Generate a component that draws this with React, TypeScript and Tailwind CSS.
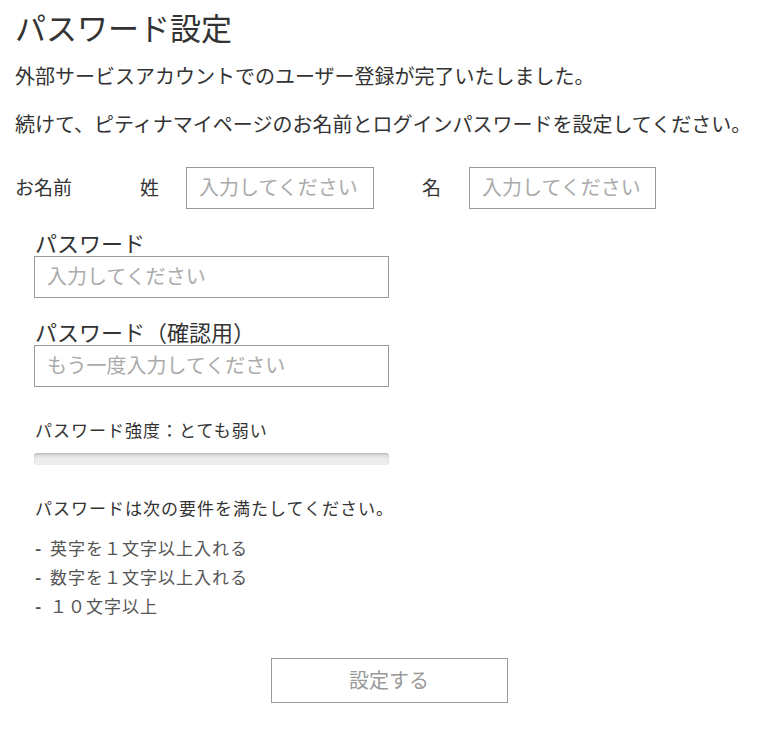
import React from "react";

const font = { fontFamily: '"Noto Sans CJK JP", "Noto Sans", sans-serif' };

const reqs = ["英字を１文字以上入れる", "数字を１文字以上入れる", "１０文字以上"];

export default function App() {
  return (
    <div className="bg-white w-[769px] min-h-[730px] pl-[15px] pt-[7px] text-[#333]" style={font}>
      <h1 className="text-[31px] leading-[40px] font-normal">パスワード設定</h1>
      <p className="mt-[14px] text-[20px] leading-[30px]">外部サービスアカウントでのユーザー登録が完了いたしました。</p>
      <p className="mt-[18px] text-[20px] leading-[30px]">続けて、ピティナマイページのお名前とログインパスワードを設定してください。</p>

      <div className="mt-[28px] flex items-center h-[42px] text-[19px]">
        <span className="w-[125px] pb-[2px]">お名前</span>
        <span className="w-[46px] pb-[2px]">姓</span>
        <input
          className="w-[188px] h-[42px] border border-[#999] px-[12px] pb-[4px] text-[20px] placeholder:text-[#aaa] outline-none"
          placeholder="入力してください"
        />
        <span className="ml-[48px] w-[47px] pb-[2px]">名</span>
        <input
          className="w-[187px] h-[42px] border border-[#999] px-[12px] pb-[4px] text-[20px] placeholder:text-[#aaa] outline-none"
          placeholder="入力してください"
        />
      </div>

      <div className="pl-[19px]">
        <label className="block mt-[19px] pl-[1px] text-[22px] leading-[28px]">パスワード</label>
        <input
          className="block w-[355px] h-[42px] border border-[#999] px-[12px] pb-[4px] text-[20px] placeholder:text-[#aaa] outline-none"
          placeholder="入力してください"
        />
        <label className="block mt-[19px] pl-[1px] text-[22px] leading-[28px]">パスワード（確認用）</label>
        <input
          className="block w-[355px] h-[42px] border border-[#999] px-[12px] pb-[4px] text-[20px] placeholder:text-[#aaa] outline-none"
          placeholder="もう一度入力してください"
        />

        <p className="mt-[31px] pl-[1px] text-[17px] tracking-[1px] leading-[24px]">パスワード強度：とても弱い</p>
        <div className="mt-[11px] w-[355px] h-[12px] rounded-[3px] bg-[linear-gradient(#d4d4d4,#ebebeb_45%,#efefef)] shadow-[inset_0_1px_2px_rgba(0,0,0,0.15)]" />

        <p className="mt-[31px] pl-[1px] text-[17px] tracking-[1px] leading-[24px]">パスワードは次の要件を満たしてください。</p>
        <ul className="mt-[13px] pl-[1px] text-[17px] tracking-[1px] leading-[29px] text-[#555]">
          {reqs.map((r) => (
            <li key={r} className="flex items-center">
              <span className="inline-block w-[15px] font-bold">-</span>
              <span>{r}</span>
            </li>
          ))}
        </ul>
      </div>

      <div className="mt-[38px] flex justify-center pl-[9px] pr-[15px]">
        <button className="w-[237px] h-[45px] border border-[#999] pb-[2px] text-[20px] text-[#999] bg-white">設定する</button>
      </div>
    </div>
  );
}
